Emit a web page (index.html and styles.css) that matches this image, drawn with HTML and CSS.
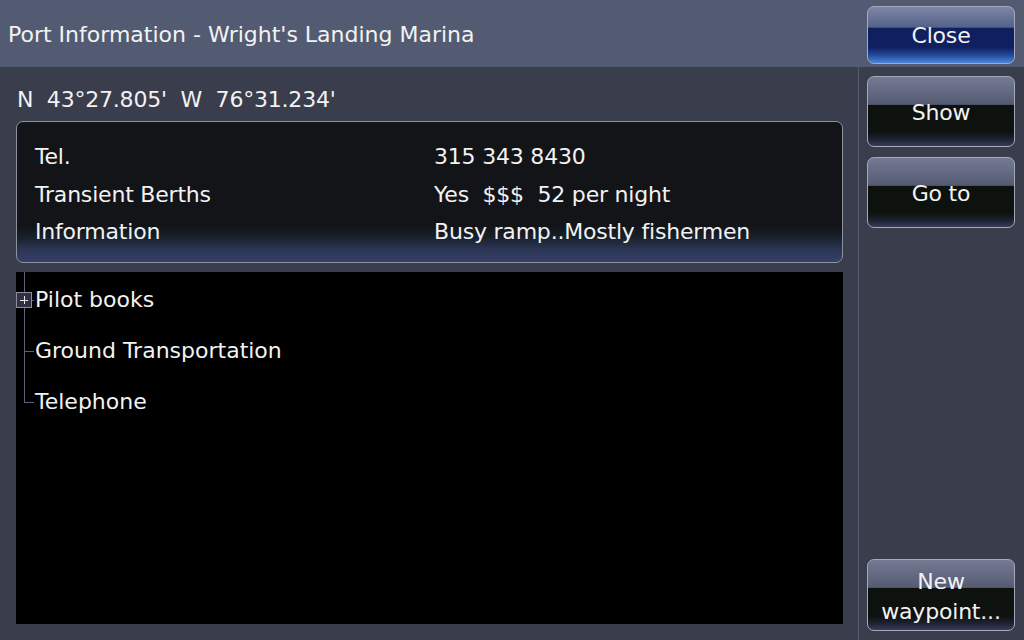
FILE: index.html
```html
<!DOCTYPE html>
<html lang="en">
<head>
    <meta charset="UTF-8">
    <title>Port Information</title>
    <link rel="stylesheet" href="styles.css">
</head>
<body>
    <header class="title-bar">
        <h1 class="title">Port Information - Wright's Landing Marina</h1>
        <button class="btn btn-close">Close</button>
    </header>

    <div class="body-row">
        <main class="content">
            <div class="coords">N&nbsp;&nbsp;43°27.805'&nbsp;&nbsp;W&nbsp;&nbsp;76°31.234'</div>

            <div class="info-box">
                <div class="info-row"><span class="info-label">Tel.</span><span>315 343 8430</span></div>
                <div class="info-row"><span class="info-label">Transient Berths</span><span>Yes&nbsp;&nbsp;$$$&nbsp;&nbsp;52 per night</span></div>
                <div class="info-row"><span class="info-label">Information</span><span>Busy ramp..Mostly fishermen</span></div>
            </div>

            <ul class="tree">
                <li class="tree-item has-children"><span class="expander"></span>Pilot books</li>
                <li class="tree-item">Ground Transportation</li>
                <li class="tree-item">Telephone</li>
            </ul>
        </main>

        <aside class="sidebar">
            <button class="btn">Show</button>
            <button class="btn">Go to</button>
            <button class="btn btn-bottom">New<br>waypoint...</button>
        </aside>
    </div>
</body>
</html>
```

FILE: styles.css
```css
:root {
    --header-bg: #525b72;
    --panel-bg: #3a3d4c;
    --text: #f2f2f2;
    --border: #8d919e;
}

* {
    margin: 0;
    padding: 0;
    box-sizing: border-box;
}

body {
    width: 1024px;
    height: 640px;
    overflow: hidden;
    background-color: var(--panel-bg);
    color: var(--text);
    font-family: 'DejaVu Sans', sans-serif;
    font-size: 22px;
}

.title-bar {
    height: 67px;
    display: flex;
    align-items: center;
    justify-content: space-between;
    background-color: var(--header-bg);
    padding: 0 9px 0 8px;
}

.title {
    font-size: 22px;
    font-weight: normal;
    padding-top: 2px;
}

.btn {
    display: flex;
    align-items: center;
    justify-content: center;
    width: 148px;
    height: 71px;
    padding-top: 3px;
    border: 1.5px solid #a4a8b8;
    border-radius: 7px;
    color: var(--text);
    font-family: inherit;
    font-size: 22px;
    line-height: 30px;
    letter-spacing: -0.2px;
    text-align: center;
    background: linear-gradient(to bottom,
        #737a92 0%, #555c74 38%, #4a5068 40%,
        #0e120f 40%, #0e120f 80%, #1c2230 90%, #363c5a 100%);
}

.btn-close {
    height: 58px;
    margin-top: 2px;
    background: linear-gradient(to bottom,
        #7d87a6 0%, #55618a 36%, #10205e 38%,
        #0f1f60 72%, #234a9a 86%, #4c86dc 100%);
}

.body-row {
    display: flex;
    height: 573px;
}

.content {
    width: 858px;
    padding: 0 15px 16px 16px;
    display: flex;
    flex-direction: column;
}

.coords {
    height: 54px;
    line-height: 66px;
    padding-left: 1px;
    letter-spacing: -0.2px;
}

.info-box {
    height: 142px;
    border: 1.5px solid var(--border);
    border-radius: 7px;
    padding: 16px 0 0 18px;
    background: linear-gradient(to bottom,
        #121418 0%, #121418 74%, #17202a 82%, #2a3350 90%, #34416a 100%);
}

.info-row {
    display: flex;
    height: 37.5px;
    line-height: 37.5px;
    letter-spacing: -0.2px;
}

.info-label {
    width: 399px;
}

.tree {
    list-style: none;
    flex: 1;
    margin-top: 9px;
    padding-top: 2px;
    background-color: #000;
}

.tree-item {
    position: relative;
    height: 51px;
    line-height: 51px;
    padding-left: 19px;
}

.tree-item::before {
    content: '';
    position: absolute;
    left: 8px;
    top: -2px;
    width: 9px;
    height: calc(50% + 2px);
    border-left: 1px solid #5a6178;
    border-bottom: 1px solid #5a6178;
}

.tree-item:not(:last-child)::after {
    content: '';
    position: absolute;
    left: 8px;
    top: 50%;
    bottom: 0;
    border-left: 1px solid #5a6178;
}

.expander {
    position: absolute;
    left: 0;
    top: 18px;
    width: 16px;
    height: 16px;
    border: 1px solid #8a8e9c;
    background-color: #2e3240;
    z-index: 1;
}

.expander::before,
.expander::after {
    content: '';
    position: absolute;
    background-color: #e8e8e8;
}

.expander::before {
    left: 3px;
    top: 6.5px;
    width: 8px;
    height: 1px;
}

.expander::after {
    left: 6.5px;
    top: 3px;
    width: 1px;
    height: 8px;
}

.sidebar {
    flex: 1;
    border-left: 1px solid #555a6f;
    padding: 9px 9px 9px 8px;
    display: flex;
    flex-direction: column;
    gap: 10px;
}

.btn-bottom {
    margin-top: auto;
    height: 72px;
}
```
